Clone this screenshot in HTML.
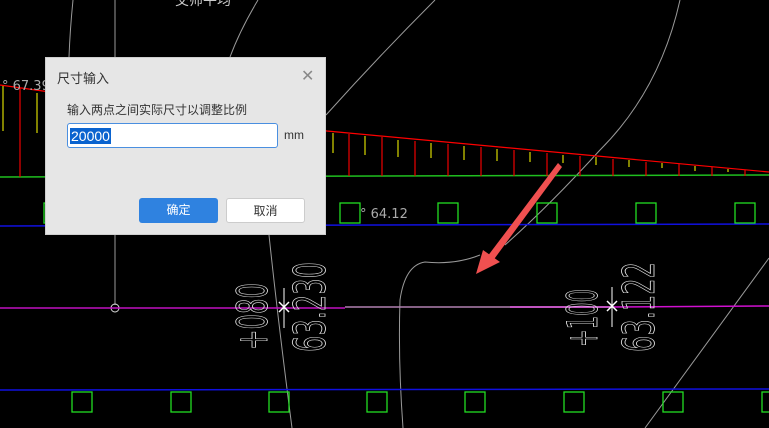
<!DOCTYPE html>
<html><head><meta charset="utf-8"><style>
html,body{margin:0;padding:0;background:#000;width:769px;height:428px;overflow:hidden;position:relative;font-family:"Liberation Sans","Noto Sans CJK SC",sans-serif}
svg{position:absolute;left:0;top:0}
.dlg{position:absolute;left:45px;top:57px;width:281px;height:178px;background:#e6e6e6;border:1px solid #cfcfcf;box-sizing:border-box}
.t{position:absolute;left:11px;top:10px;font-size:13px;color:#333}
.x{position:absolute;left:255px;top:8px;font-size:16px;color:#888}
.lb{position:absolute;left:21px;top:43px;font-size:12px;color:#333}
.in{position:absolute;left:21px;top:65px;width:211px;height:25px;background:#fff;border:1px solid #4a8fe0;border-radius:3px;box-sizing:border-box}
.sel{position:absolute;left:2px;top:4px;background:#0a63cf;color:#fff;font-size:14px;line-height:16px;padding:0 1px}
.mm{position:absolute;left:238px;top:70px;font-size:12px;color:#333}
.b{position:absolute;top:140px;width:79px;height:25px;border-radius:3px;box-sizing:border-box;font-size:12px;text-align:center;line-height:25px}
.ok{left:93px;background:#2f82e0;color:#fff}
.no{left:180px;background:#fff;border:1px solid #ccc;color:#333}
</style></head><body>
<svg width="769" height="428" viewBox="0 0 769 428">
<g stroke="#9a9a9a" fill="none" stroke-width="1">
<line x1="115" y1="0" x2="115" y2="305"/>
<circle cx="115" cy="308" r="4" stroke="#ddd"/>
<path d="M73 0 Q70 30 69 57"/>
<path d="M258 0 Q240 30 230 57"/>
<path d="M269 235 Q278 320 292 428"/>
<path d="M435 0 Q380 55 326 115"/>
<path d="M680 0 Q660 90 600 150 Q550 205 505 245"/>
<path d="M403 428 Q398 360 400 300 Q405 265 425 262 Q455 265 480 255"/>
<path d="M769 258 L645 428"/>
</g>
<polyline points="0,85 327,131 769,172" stroke="#f00" fill="none" stroke-width="1.2"/>
<line x1="0" y1="177" x2="769" y2="175" stroke="#1fbf1f" stroke-width="1.5"/>
<g stroke="#e00" stroke-width="1.2">
<line x1="20" y1="88" x2="20" y2="177"/>
<line x1="349" y1="134" x2="349" y2="176"/><line x1="382" y1="137" x2="382" y2="176"/><line x1="415" y1="141" x2="415" y2="176"/><line x1="448" y1="144" x2="448" y2="176"/><line x1="481" y1="147" x2="481" y2="176"/><line x1="514" y1="150" x2="514" y2="176"/><line x1="547" y1="153" x2="547" y2="176"/><line x1="580" y1="156" x2="580" y2="176"/><line x1="613" y1="159" x2="613" y2="176"/><line x1="646" y1="162" x2="646" y2="176"/><line x1="679" y1="164" x2="679" y2="176"/><line x1="712" y1="167" x2="712" y2="176"/><line x1="745" y1="170" x2="745" y2="176"/>
</g>
<g stroke="#d8d800" stroke-width="1.2">
<line x1="3" y1="86" x2="3" y2="131"/><line x1="37" y1="93" x2="37" y2="133"/>
<line x1="333" y1="133" x2="333" y2="153"/><line x1="365" y1="136" x2="365" y2="155"/><line x1="398" y1="140" x2="398" y2="157"/><line x1="431" y1="143" x2="431" y2="158"/><line x1="464" y1="146" x2="464" y2="160"/><line x1="497" y1="149" x2="497" y2="161"/><line x1="530" y1="152" x2="530" y2="162"/><line x1="563" y1="155" x2="563" y2="163"/><line x1="596" y1="157" x2="596" y2="165"/><line x1="629" y1="160" x2="629" y2="167"/><line x1="662" y1="163" x2="662" y2="168"/><line x1="695" y1="166" x2="695" y2="171"/><line x1="728" y1="169" x2="728" y2="172"/>
</g>
<line x1="0" y1="226" x2="769" y2="224" stroke="#1010e0" stroke-width="1.5"/>
<line x1="0" y1="390" x2="769" y2="389" stroke="#1010e0" stroke-width="1.5"/>
<g stroke="#22dd22" fill="none" stroke-width="1.3">
<rect x="44" y="203" width="20" height="20"/><rect x="340" y="203" width="20" height="20"/><rect x="438" y="203" width="20" height="20"/><rect x="537" y="203" width="20" height="20"/><rect x="636" y="203" width="20" height="20"/><rect x="735" y="203" width="20" height="20"/>
<rect x="72" y="392" width="20" height="20"/><rect x="171" y="392" width="20" height="20"/><rect x="269" y="392" width="20" height="20"/><rect x="367" y="392" width="20" height="20"/><rect x="465" y="392" width="20" height="20"/><rect x="564" y="392" width="20" height="20"/><rect x="663" y="392" width="20" height="20"/><rect x="762" y="392" width="20" height="20"/>
</g>
<line x1="0" y1="308" x2="345" y2="308" stroke="#c010c0" stroke-width="1.5"/>
<line x1="345" y1="307" x2="510" y2="307" stroke="#b080b0" stroke-width="1.5"/>
<line x1="510" y1="307" x2="610" y2="307" stroke="#ff70ff" stroke-width="1.5"/>
<line x1="610" y1="307" x2="769" y2="306" stroke="#d010d0" stroke-width="1.5"/>
<g stroke="#fff" stroke-width="1.5">
<line x1="279" y1="302" x2="289" y2="312"/><line x1="289" y1="302" x2="279" y2="312"/>
<line x1="607" y1="301" x2="617" y2="311"/><line x1="617" y1="301" x2="607" y2="311"/>
<line x1="284" y1="288" x2="284" y2="328" stroke-width="1"/><line x1="612" y1="287" x2="612" y2="327" stroke-width="1"/>
</g>
<path d="M558 163 L562 167 L492 262 L487 257 Z" fill="#f05050"/>
<path d="M476 274 L483 250 L500 262 Z" fill="#f05050"/>
<g font-family="DejaVu Sans, sans-serif">
<text transform="translate(267,350) rotate(-90)" font-size="42" textLength="67" lengthAdjust="spacingAndGlyphs" fill="none" stroke="#ddd" stroke-width="0.9">+080</text>
<text transform="translate(325,352) rotate(-90)" font-size="44" textLength="90" lengthAdjust="spacingAndGlyphs" fill="none" stroke="#ddd" stroke-width="0.9">63.230</text>
<text transform="translate(597,347) rotate(-90)" font-size="42" textLength="58" lengthAdjust="spacingAndGlyphs" fill="none" stroke="#ddd" stroke-width="0.9">+100</text>
<text transform="translate(654,352) rotate(-90)" font-size="44" textLength="90" lengthAdjust="spacingAndGlyphs" fill="none" stroke="#ddd" stroke-width="0.9">63.122</text>
<text x="360" y="218" font-size="13" fill="#aaa">° 64.12</text>
<text x="2" y="90" font-size="13" fill="#aaa">° 67.39</text>
<text x="175" y="5" font-size="14" fill="#ccc">交师平均</text>
</g>
</svg>
<div class="dlg">
<div class="t">尺寸输入</div>
<div class="x">✕</div>
<div class="lb">输入两点之间实际尺寸以调整比例</div>
<div class="in"><span class="sel">20000</span></div>
<div class="mm">mm</div>
<div class="b ok">确定</div>
<div class="b no">取消</div>
</div>
</body></html>
